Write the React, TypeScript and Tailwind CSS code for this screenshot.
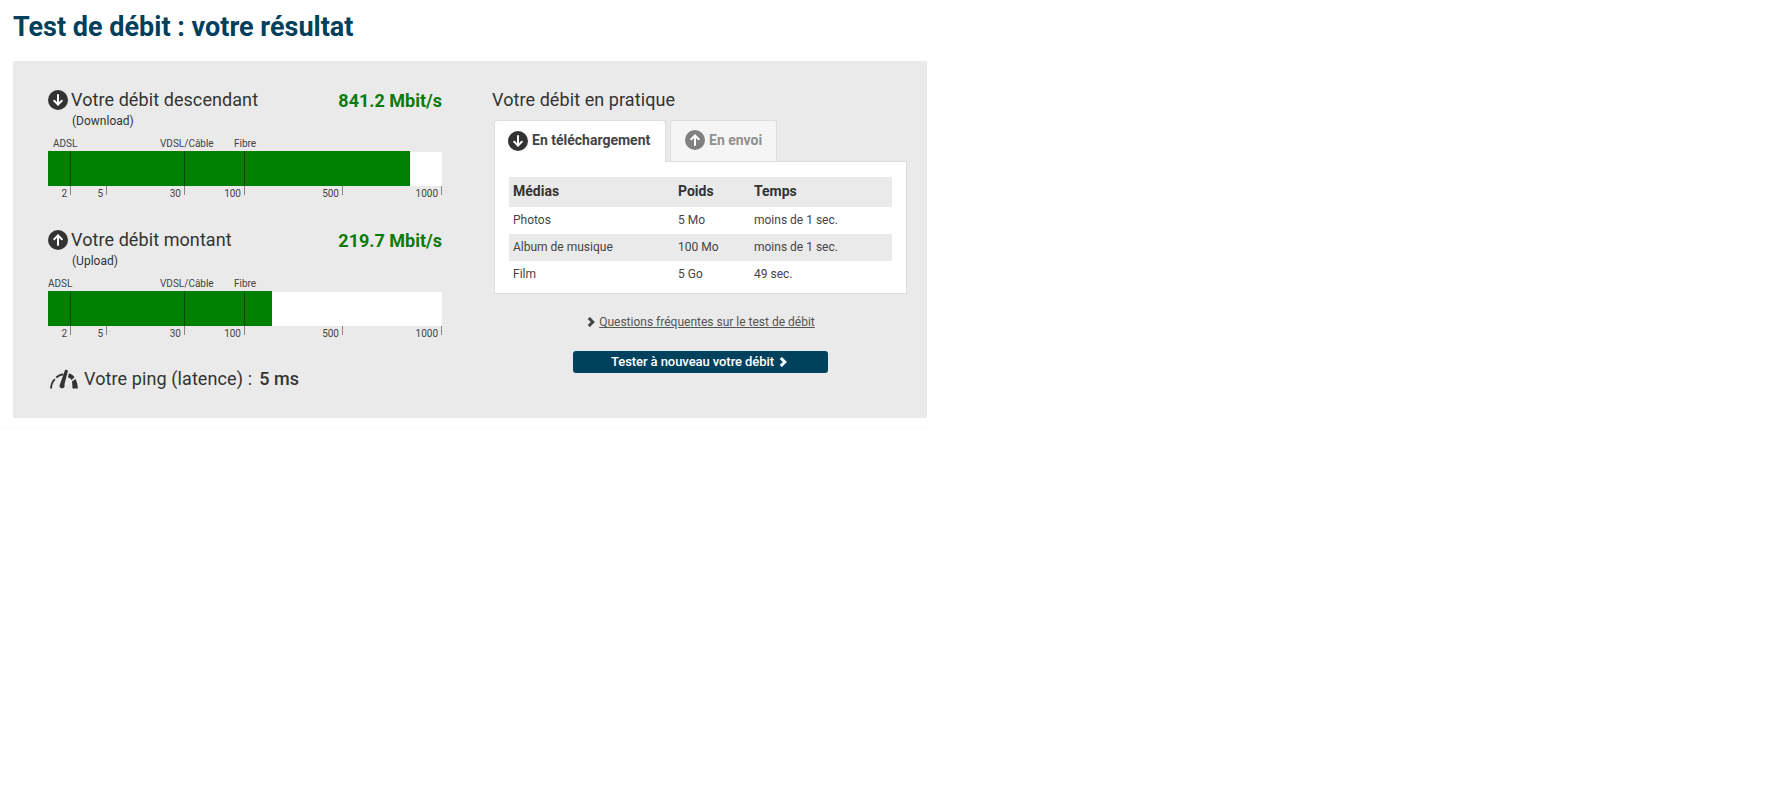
import * as React from 'react';

type Tick = { label: string; x: number };

const TICKS: Tick[] = [
    { label: '2', x: 22 },
    { label: '5', x: 58 },
    { label: '30', x: 136 },
    { label: '100', x: 196 },
    { label: '500', x: 294 },
    { label: '1000', x: 393 },
];

function ArrowCircle({ dir, className }: { dir: 'up' | 'down'; className: string }) {
    return (
        <svg viewBox="0 0 20 20" className={className}>
            <circle cx="10" cy="10" r="10" fill="currentColor" />
            <g transform={dir === 'up' ? 'rotate(180 10 10)' : undefined} fill="none" stroke="#fff" strokeWidth="2" strokeLinecap="round" strokeLinejoin="round">
                <path d="M10 5v9.5" />
                <path d="M6.200 10.800 10 14.600l3.800-3.800" />
            </g>
        </svg>
    );
}

function Chevron({ className }: { className: string }) {
    return (
        <svg viewBox="0 0 8 10" className={className} fill="none" stroke="currentColor" strokeWidth="3">
            <path d="M1.800 1 5.800 5l-4 4" />
        </svg>
    );
}

function Gauge() {
    return (
        <svg viewBox="0 0 28 20" className="h-5 w-7 shrink-0 text-[#333]" fill="currentColor">
            <path d="M1 19.500c.2-3.800 1.600-7 3.900-9.300" fill="none" stroke="currentColor" strokeWidth="1.800" />
            <path d="M6.300 8.600C8.200 6.800 10.500 5.700 13.200 5.300" fill="none" stroke="currentColor" strokeWidth="2" />
            <path d="M15.200.5 18 1.400 14.400 15.500c.9 1.800-.3 3.800-2.300 3.800-2.200 0-3.400-2.300-2.100-4z" />
            <path d="M19 4.200c2.200.8 4 2 5.500 3.700l-2.800 3c-1.100-1.100-2.400-2-3.800-2.600z" />
            <path d="M22 12.400 25.400 10c1.400 2.200 2.300 5.500 2.400 9.500h-5.300c-.1-2.800-.3-5.100-.5-7.100z" />
        </svg>
    );
}

function SpeedBar({ percent, adslOffset }: { percent: number; adslOffset: number }) {
    return (
        <div className="relative w-[394px]">
            {/* technology labels above the bar */}
            <div className="relative h-[13px] text-[10px] leading-[11px] text-[#444]">
                <span className="absolute top-0" style={{ left: adslOffset }}>ADSL</span>
                <span className="absolute top-0 left-[112px]">VDSL/Câble</span>
                <span className="absolute top-0 left-[186px]">Fibre</span>
            </div>
            <div className="relative h-[35px] w-full">
                <div className="absolute inset-x-0 top-px bottom-0 bg-white" />
                <div className="absolute inset-y-0 left-0 bg-[#008000]" style={{ width: `${percent}px` }} />
                <div className="absolute inset-y-0 left-[22px] w-px bg-[#0b4a0b]" />
                <div className="absolute inset-y-0 left-[136px] w-px bg-[#0b4a0b]" />
                <div className="absolute inset-y-0 left-[196px] w-px bg-[#0b4a0b]" />
            </div>
            <div className="relative h-[13px] text-[10px] leading-[15px] text-[#444]">
                {TICKS.map((t) => (
                    <React.Fragment key={t.label}>
                        <span className="absolute top-0 w-px h-[9px] bg-[#888]" style={{ left: t.x }} />
                        <span className="absolute top-0" style={{ right: 394 - t.x + 3 }}>{t.label}</span>
                    </React.Fragment>
                ))}
            </div>
        </div>
    );
}

function SpeedBlock(props: { title: string; sub: string; value: string; dir: 'up' | 'down'; width: number; adslOffset: number }) {
    return (
        <div className="w-[394px]">
            <div className="flex items-start justify-between">
                <div className="flex items-center gap-[3px]">
                    <ArrowCircle dir={props.dir} className="h-5 w-5 text-[#333]" />
                    <span className="text-[18px] leading-5 tracking-[0.08px] text-[#333]">{props.title}</span>
                </div>
                <span className="text-[18px] leading-[22px] font-bold text-[#0a7a0a]">{props.value}</span>
            </div>
            <div className="mt-[-1px] pl-[24px] text-[12px] leading-5 text-[#333]">{props.sub}</div>
            <div className="mt-[7px]">
                <SpeedBar percent={props.width} adslOffset={props.adslOffset} />
            </div>
        </div>
    );
}

const ROWS = [
    ['Photos', '5 Mo', 'moins de 1 sec.'],
    ['Album de musique', '100 Mo', 'moins de 1 sec.'],
    ['Film', '5 Go', '49 sec.'],
];

export default function App() {
    return (
        <div className="min-h-[805px] bg-white font-['Roboto',sans-serif] text-[#333]">
            <h1 className="pl-[13px] pt-[10px] text-[27px] leading-[34px] font-bold text-[#00405c]">
                Test de débit : votre résultat
            </h1>

            <div className="mt-[17px] ml-[13px] flex h-[357px] w-[914px] bg-[#eaeaea] pl-[35px] pt-[29px]">
                {/* left column */}
                <div className="w-[394px]">
                    <SpeedBlock title="Votre débit descendant" sub="(Download)" value="841.2 Mbit/s" dir="down" width={362} adslOffset={5} />
                    <div className="mt-[31px]">
                        <SpeedBlock title="Votre débit montant" sub="(Upload)" value="219.7 Mbit/s" dir="up" width={224} adslOffset={0} />
                    </div>
                    <div className="mt-[30px] flex items-center pl-[2px] text-[18px] leading-5 tracking-[0.1px]">
                        <Gauge />
                        <span className="ml-[6px]">Votre ping (latence) :</span>
                        <span className="ml-[7px] font-medium">5 ms</span>
                    </div>
                </div>

                {/* right column */}
                <div className="ml-[51px] w-[414px]">
                    <h2 className="-ml-px text-[18px] leading-5 tracking-[0.08px] font-normal">Votre débit en pratique</h2>
                    <div className="mt-[10px] ml-px flex items-end gap-[4px]">
                        <div className="relative z-10 -mb-px flex h-[42px] w-[172px] items-center gap-[4px] rounded-t-[3px] border border-b-0 border-[#ddd] bg-white pb-[2px] pl-[13px] text-[14px] font-bold text-[#444]">
                            <ArrowCircle dir="down" className="h-5 w-5 text-[#333]" />
                            En téléchargement
                        </div>
                        <div className="flex h-[41px] w-[107px] items-center gap-[4px] rounded-t-[3px] border border-b-0 border-[#ddd] bg-[#f5f5f5] pb-[2px] pl-[14px] text-[14px] font-bold text-[#909090]">
                            <ArrowCircle dir="up" className="h-5 w-5 text-[#808080]" />
                            En envoi
                        </div>
                    </div>
                    <div className="ml-px h-[133px] w-[413px] border border-[#ddd] bg-white px-[14px] pt-[15px]">
                        <div className="grid h-[30px] grid-cols-[165px_76px_1fr] items-center bg-[#eaeaea] pb-[2px] text-[14px] font-bold">
                            <span className="pl-[4px]">Médias</span>
                            <span className="pl-[4px]">Poids</span>
                            <span className="pl-[4px]">Temps</span>
                        </div>
                        {ROWS.map((row, i) => (
                            <div key={row[0]} className={`grid h-[27px] grid-cols-[165px_76px_1fr] items-center pb-[2px] text-[12px] text-[#444] ${i === 1 ? 'bg-[#eaeaea]' : 'bg-white'}`}>
                                {row.map((cell) => (
                                    <span key={cell} className="pl-[4px]">{cell}</span>
                                ))}
                            </div>
                        ))}
                    </div>
                    <div className="mt-[20px] flex items-center justify-center gap-[4px] pl-[2px] text-[12px] leading-4 text-[#555]">
                        <Chevron className="h-[10px] w-2 text-[#444]" />
                        <span className="underline">Questions fréquentes sur le test de débit</span>
                    </div>
                    <div className="mt-[21px] flex justify-center">
                        <button className="flex h-[22px] w-[255px] items-center justify-center gap-[5px] rounded-[3px] bg-[#00425e] pr-[2px] text-[13px] font-medium tracking-[-0.07px] text-white">
                            Tester à nouveau votre débit
                            <Chevron className="h-[10px] w-2 text-white" />
                        </button>
                    </div>
                </div>
            </div>
            <div className="mt-[9px] h-[2px] w-[927px] bg-[#fcfcfc]" />
        </div>
    );
}
